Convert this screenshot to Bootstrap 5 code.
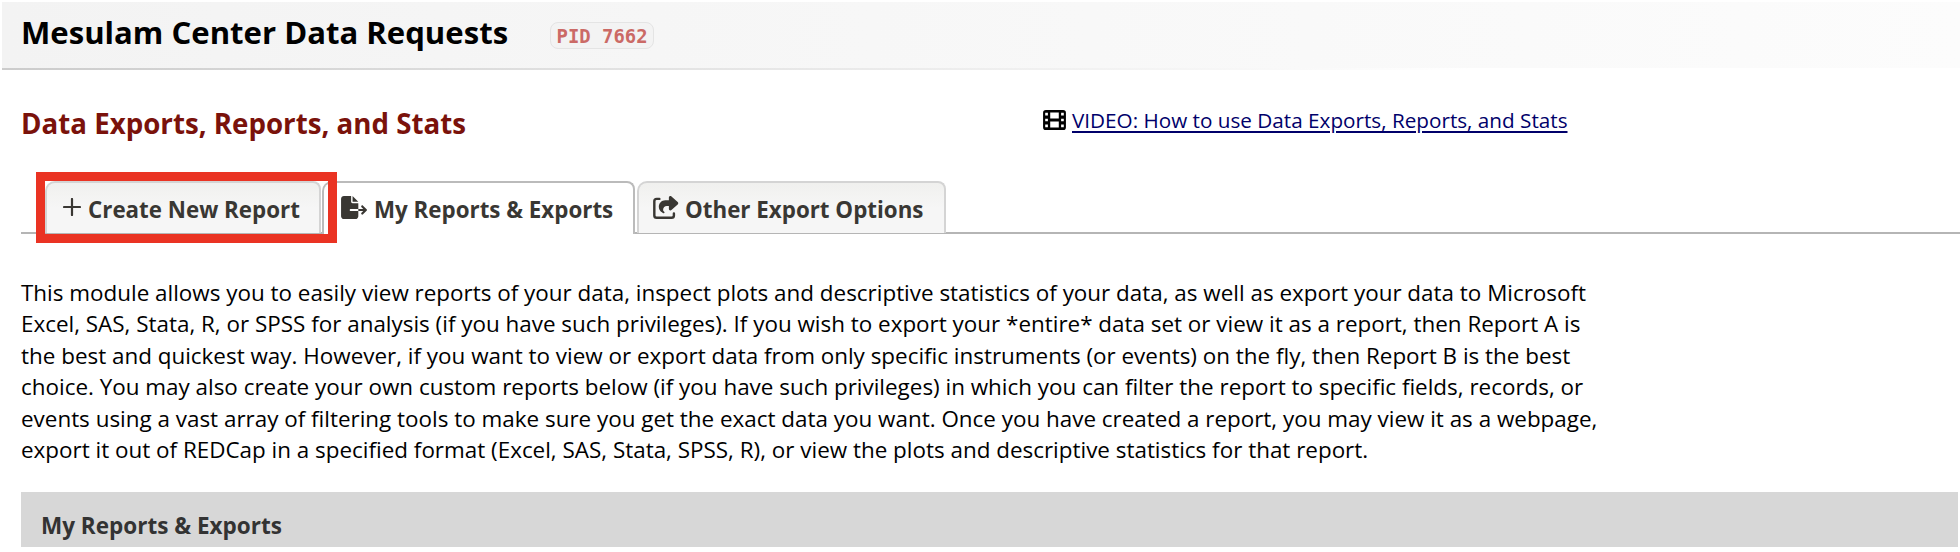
<!DOCTYPE html>
<html lang="en">
<head>
<meta charset="utf-8">
<title>Data Exports, Reports, and Stats</title>
<link href="https://cdn.jsdelivr.net/npm/bootstrap@5.3.0/dist/css/bootstrap.min.css" rel="stylesheet">
<style>
body{font-family:"Open Sans",sans-serif;color:#000;background:#fff;overflow:hidden;height:552px}
.project-bar{margin:2px 0 0 2px;height:68px;padding-left:19px;background:linear-gradient(90deg,#f3f3f3,#fcfcfc);border-bottom:2px solid;border-image:linear-gradient(90deg,#ccc,#fff 75%) 1}
.project-bar h1{font-size:31.1px;line-height:60px;font-weight:700}
.pid{margin:20px 0 0 42px;height:27px;width:104px;border:1px solid #e4e4e4;border-radius:8px;background:#f3f3f3;color:#cb6a66;font:700 18.9px/27px "DejaVu Sans Mono",monospace}
.page-title{font-size:27.7px;line-height:36px;font-weight:700;color:#7a120b;width:1022px}
.title-row{padding:35px 0 0 21px;height:111px}
.video{gap:6px}
.video a{color:#00006a;font-size:20.7px;line-height:30px;text-underline-offset:3px}
.report-tabs{margin-left:21px;padding-left:24px;height:53px;border-bottom:2px solid #b5b5b5}
.report-tab{height:52px;border:2px solid #d4d4d4;border-bottom:0;border-radius:10px 8px 0 0;background:linear-gradient(#f0f0ee,#f6f6f6 50%);color:#393733;font-size:22.35px;line-height:30px;font-weight:700;white-space:nowrap;padding-top:12px}
.report-tab svg{position:relative;top:-1px}
.report-tab.active{background:#fff;border-color:#bbb;height:53px}
.tab-create{width:276px;padding-left:16px;margin-right:1px}
.tab-mine{width:313px;padding-left:17px;margin-right:2px}
.tab-other{width:309px;padding-left:14px}
.callout{left:36px;top:172px;width:301px;height:71px;border:9px solid #ea3323}
.intro{margin:43px 0 0 21px;font-size:22.43px;line-height:31.45px;white-space:nowrap}
.section-head{margin:26px 2px 0 21px;height:55px;padding:16px 0 0 20px;background:#d7d7d7;font-size:22.5px;line-height:36px;font-weight:700;color:#333}
svg{flex:none}
</style>
</head>
<body>
<header class="project-bar d-flex align-items-start">
<h1 class="m-0">Mesulam Center Data Requests</h1>
<span class="pid text-center">PID 7662</span>
</header>
<div class="title-row d-flex align-items-start">
<h2 class="page-title m-0">Data Exports, Reports, and Stats</h2>
<div class="video d-flex align-items-center">
<svg width="23" height="20" viewBox="0 32 512 448"><path fill-rule="evenodd" d="M64 32H448a64 64 0 0 1 64 64V416a64 64 0 0 1-64 64H64a64 64 0 0 1-64-64V96A64 64 0 0 1 64 32zM48 96h60v60H48zM48 226h60v60H48zM48 356h60v60H48zM404 96h60v60h-60zM404 226h60v60h-60zM404 356h60v60h-60zM160 88h192v136H160zM160 288h192v136H160z"/></svg>
<a href="#">VIDEO: How to use Data Exports, Reports, and Stats</a>
</div>
</div>
<nav class="report-tabs d-flex align-items-start">
<div class="report-tab tab-create d-flex align-items-start">
<svg class="mt-1" width="18" height="18" viewBox="0 0 18 18" style="margin-right:7px"><path d="M9 1v16M1 9h16" stroke="#393733" stroke-width="2.200" stroke-linecap="round"/></svg>Create New Report</div>
<div class="report-tab tab-mine active d-flex align-items-start">
<svg width="26" height="23" viewBox="0 0 576 512" fill="#393733" style="margin:2px 7px 0 0"><path d="M0 64C0 28.700 28.700 0 64 0H224V128c0 17.700 14.300 32 32 32H384V288H216c-13.300 0-24 10.700-24 24s10.700 24 24 24H384V448c0 35.300-28.700 64-64 64H64c-35.300 0-64-28.700-64-64V64zM384 336V288H494.100l-39-39c-9.400-9.400-9.400-24.600 0-33.900s24.600-9.400 33.900 0l80 80c9.400 9.400 9.400 24.600 0 33.900l-80 80c-9.400 9.400-24.600 9.400-33.900 0s-9.400-24.600 0-33.900l39-39H384zM384 128H256V0L384 128z"/></svg>My Reports &amp; Exports</div>
<div class="report-tab tab-other d-flex align-items-start">
<svg width="26" height="23" viewBox="0 0 576 512" fill="#393733" style="margin:2px 6px 0 0"><path d="M352 224H305.500c-45 0-81.500 36.500-81.500 81.500c0 22.300 10.300 34.300 19.200 40.500c6.800 4.700 12.800 12 12.800 20.300c0 9.800-8 17.800-17.800 17.800h-2.500c-2.400 0-4.800-.4-7.100-1.400C210.800 374.800 128 333.400 128 240c0-79.500 64.500-144 144-144h80V34.700C352 15.500 367.500 0 386.700 0c8.600 0 16.800 3.200 23.200 8.900L548.100 133.300c7.600 6.800 11.900 16.500 11.900 26.700s-4.300 19.900-11.900 26.700l-139 125.100c-5.900 5.300-13.500 8.200-21.400 8.200H384c-17.700 0-32-14.300-32-32V224z"/><path d="M140 64H80Q28 64 28 116V432Q28 484 80 484H412Q464 484 464 432V388" fill="none" stroke="#393733" stroke-width="54" stroke-linecap="round"/></svg>Other Export Options</div>
</nav>
<div class="callout position-absolute"></div>
<p class="intro mb-0">This module allows you to easily view reports of your data, inspect plots and descriptive statistics of your data, as well as export your data to Microsoft<br>Excel, SAS, Stata, R, or SPSS for analysis (if you have such privileges). If you wish to export your *entire* data set or view it as a report, then Report A is<br>the best and quickest way. However, if you want to view or export data from only specific instruments (or events) on the fly, then Report B is the best<br>choice. You may also create your own custom reports below (if you have such privileges) in which you can filter the report to specific fields, records, or<br>events using a vast array of filtering tools to make sure you get the exact data you want. Once you have created a report, you may view it as a webpage,<br>export it out of REDCap in a specified format (Excel, SAS, Stata, SPSS, R), or view the plots and descriptive statistics for that report.</p>
<div class="section-head">My Reports &amp; Exports</div>
<script src="https://cdn.jsdelivr.net/npm/bootstrap@5.3.0/dist/js/bootstrap.bundle.min.js"></script>
</body>
</html>
